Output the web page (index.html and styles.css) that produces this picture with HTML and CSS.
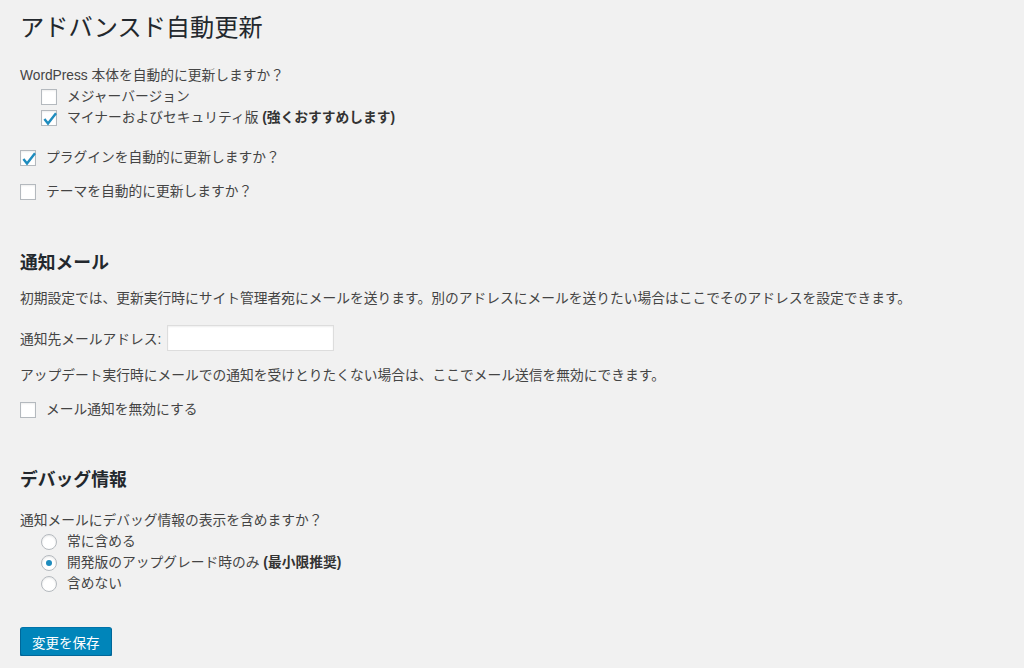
FILE: index.html
```html
<!DOCTYPE html>
<html lang="ja">
  <head>
    <meta charset="UTF-8" />
    <meta name="viewport" content="width=device-width, initial-scale=1.0" />
    <title>アドバンスド自動更新</title>
    <link rel="stylesheet" href="styles.css">
  </head>
  <body>
    <div class="wrap">
      <h1>アドバンスド自動更新</h1>

      <div class="core-block">
        <p class="question">WordPress 本体を自動的に更新しますか？</p>
        <div class="sub-list">
          <label class="row">
            <span class="box"></span>
            <span>メジャーバージョン</span>
          </label>
          <label class="row">
            <span class="box">
              <svg viewBox="0 0 16 16" width="16" height="16"><path d="M3.4 9 L7 13.6 L15 3.2" fill="none" stroke="#1e8cbe" stroke-width="2.4"/></svg>
            </span>
            <span>マイナーおよびセキュリティ版 <b>(強くおすすめします)</b></span>
          </label>
        </div>
      </div>

      <label class="row top-row plugins">
        <span class="box">
          <svg viewBox="0 0 16 16" width="16" height="16"><path d="M3.4 9 L7 13.6 L15 3.2" fill="none" stroke="#1e8cbe" stroke-width="2.4"/></svg>
        </span>
        <span>プラグインを自動的に更新しますか？</span>
      </label>
      <label class="row top-row themes">
        <span class="box"></span>
        <span>テーマを自動的に更新しますか？</span>
      </label>

      <h2 class="mail-title">通知メール</h2>
      <p class="desc">初期設定では、更新実行時にサイト管理者宛にメールを送ります。別のアドレスにメールを送りたい場合はここでそのアドレスを設定できます。</p>
      <div class="email-row">
        <label for="email">通知先メールアドレス:</label>
        <input type="email" id="email" />
      </div>
      <p class="desc desc-2">アップデート実行時にメールでの通知を受けとりたくない場合は、ここでメール送信を無効にできます。</p>
      <label class="row top-row disable-mail">
        <span class="box"></span>
        <span>メール通知を無効にする</span>
      </label>

      <h2 class="debug-title">デバッグ情報</h2>
      <p class="question debug-q">通知メールにデバッグ情報の表示を含めますか？</p>
      <div class="sub-list">
        <label class="row">
          <span class="radio"></span>
          <span>常に含める</span>
        </label>
        <label class="row">
          <span class="radio checked"></span>
          <span>開発版のアップグレード時のみ <b>(最小限推奨)</b></span>
        </label>
        <label class="row">
          <span class="radio"></span>
          <span>含めない</span>
        </label>
      </div>

      <div class="submit">
        <button class="save-btn">変更を保存</button>
      </div>
    </div>
  </body>
</html>
```

FILE: styles.css
```css
body {
  margin: 0;
  padding: 0;
  background-color: #f1f1f1;
  color: #444;
  font-family: "Liberation Sans", "Noto Sans CJK JP", sans-serif;
  font-size: 13.75px;
}
.wrap {
  padding: 12px 20px 0 20px;
}
h1 {
  margin: 0;
  font-size: 24.2px;
  font-weight: 400;
  line-height: 31px;
  color: #23282d;
}
h2 {
  margin: 0;
  font-size: 17.8px;
  font-weight: 700;
  line-height: 23px;
  color: #23282d;
}
p {
  margin: 0;
  line-height: 21px;
}
b {
  color: #333;
}
.core-block {
  margin-top: 22px;
}
.sub-list {
  padding-left: 21px;
}
.row {
  display: flex;
  align-items: center;
  height: 21px;
  line-height: 21px;
}
.box {
  width: 16px;
  height: 16px;
  box-sizing: border-box;
  border: 1px solid #b4b9be;
  background: #fff;
  box-shadow: inset 0 1px 2px rgba(0, 0, 0, 0.07);
  margin-right: 10px;
  flex-shrink: 0;
  position: relative;
}
.box svg {
  position: absolute;
  left: -1px;
  top: -1px;
}
.radio {
  width: 16px;
  height: 16px;
  box-sizing: border-box;
  border: 1px solid #b4b9be;
  border-radius: 50%;
  background: #fff;
  box-shadow: inset 0 1px 2px rgba(0, 0, 0, 0.1);
  margin-right: 10px;
  flex-shrink: 0;
  display: flex;
  justify-content: center;
  align-items: center;
}
.radio.checked::before {
  content: "";
  width: 6px;
  height: 6px;
  border-radius: 50%;
  background: #1e8cbe;
}
.plugins {
  margin-top: 19px;
}
.themes {
  margin-top: 13px;
}
.mail-title {
  margin-top: 50px;
}
.desc {
  margin-top: 13px;
}
.email-row {
  margin-top: 16px;
  display: flex;
  align-items: center;
  gap: 6px;
}
.email-row input {
  width: 167px;
  height: 26px;
  box-sizing: border-box;
  border: 1px solid #ddd;
  background: #fff;
  box-shadow: inset 0 1px 2px rgba(0, 0, 0, 0.07);
  margin: 0;
}
.desc-2 {
  margin-top: 14px;
}
.disable-mail {
  margin-top: 13px;
}
.debug-title {
  margin-top: 49px;
}
.debug-q {
  margin-top: 18px;
}
.submit {
  margin-top: 33px;
}
.save-btn {
  font-family: "Liberation Sans", "Noto Sans CJK JP", sans-serif;
  font-size: 13.5px;
  color: #fff;
  background: #0085ba;
  border: 1px solid #0073aa;
  border-color: #0073aa #006799 #006799;
  box-shadow: 0 1px 0 #006799;
  border-radius: 3px;
  height: 29px;
  padding: 0 11px;
  cursor: pointer;
}
```
